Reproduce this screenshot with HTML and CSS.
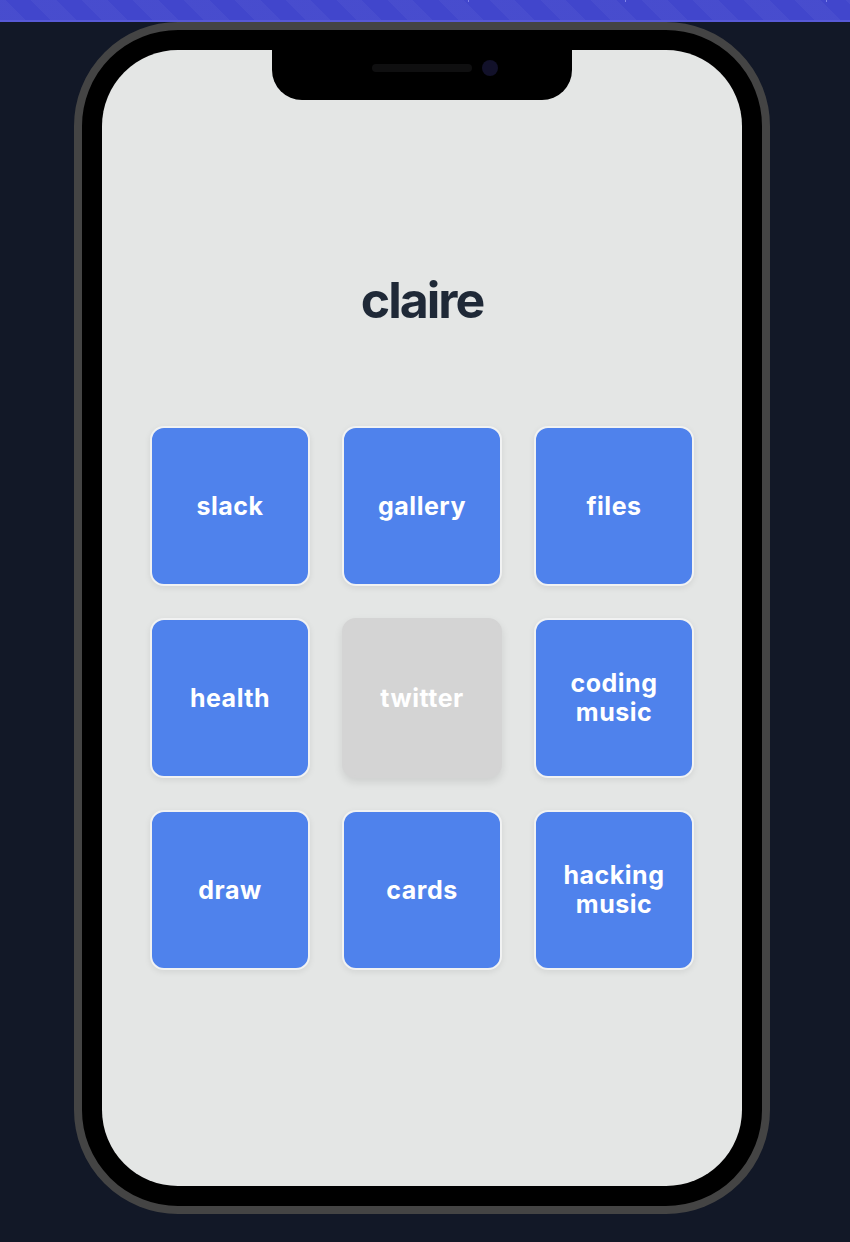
FILE: index.html
```html
<!DOCTYPE html>
<html>
<head>
<meta charset="utf-8">
<link rel="stylesheet" href="styles.css">
</head>
<body>
<div class="topbar">
  <span class="tick t1"></span><span class="tick t2"></span><span class="tick t3"></span>
</div>
<div class="stage">
  <div class="phone">
    <div class="screen">
      <div class="notch"><span class="speaker"></span><span class="camera"></span></div>
      <h1 class="title">claire</h1>
      <div class="grid">
        <div class="tile">slack</div>
        <div class="tile">gallery</div>
        <div class="tile">files</div>
        <div class="tile">health</div>
        <div class="tile tile-off">twitter</div>
        <div class="tile">coding<br>music</div>
        <div class="tile">draw</div>
        <div class="tile">cards</div>
        <div class="tile">hacking<br>music</div>
      </div>
    </div>
  </div>
</div>
</body>
</html>
```
FILE: styles.css
```css
html, body {
  margin: 0;
  padding: 0;
  background: #121827;
  font-family: Inter, "Noto Sans", "Liberation Sans", sans-serif;
}
.topbar {
  position: relative;
  height: 20px;
  border-bottom: 2px solid #5759d6;
  background-color: #4146cc;
  background-image: repeating-linear-gradient(45deg, rgba(255,255,255,0.035) 0 18px, rgba(255,255,255,0) 18px 36px);
}
.tick {
  position: absolute;
  top: 0;
  width: 1px;
  height: 2px;
  background: #7f83e8;
}
.t1 { left: 468px; }
.t2 { left: 625px; }
.t3 { left: 826px; }
.stage {
  padding-left: 74px;
  padding-bottom: 40px;
}
.phone {
  width: 640px;
  border: 8px solid #444444;
  padding: 20px;
  background: #000;
  border-radius: 104px;
}
.screen {
  position: relative;
  height: 1136px;
  background: #e4e6e5;
  border-radius: 76px;
  display: flex;
  flex-direction: column;
  align-items: center;
  padding-top: 220px;
  box-sizing: border-box;
}
.notch {
  position: absolute;
  top: 0;
  left: 170px;
  width: 300px;
  height: 50px;
  background: #000;
  border-radius: 0 0 30px 30px;
  display: flex;
  align-items: center;
  justify-content: center;
  gap: 10px;
  padding-left: 26px;
  padding-bottom: 14px;
  box-sizing: border-box;
}
.speaker {
  width: 100px;
  height: 8px;
  border-radius: 4px;
  background: #0f0f10;
}
.camera {
  width: 16px;
  height: 16px;
  border-radius: 50%;
  background: #12112a;
}
.title {
  margin: 0 0 96px;
  height: 60px;
  line-height: 60px;
  font-size: 50px;
  font-weight: 700;
  letter-spacing: -0.04em;
  color: #1f2937;
}
.grid {
  display: grid;
  grid-template-columns: repeat(3, 160px);
  grid-auto-rows: 160px;
  gap: 32px;
}
.tile {
  box-sizing: border-box;
  border: 2px solid #f1f2f2;
  border-radius: 14px;
  background: #4f82ec;
  color: #ffffff;
  font-size: 25px;
  font-weight: 700;
  letter-spacing: 0.02em;
  line-height: 1.15;
  text-align: center;
  display: flex;
  align-items: center;
  justify-content: center;
  box-shadow: 0 2px 6px rgba(0,0,0,0.08);
}
.tile-off {
  background: #d4d4d4;
  border-color: #d4d4d4;
  box-shadow: 0 4px 8px rgba(0,0,0,0.10);
}
```
